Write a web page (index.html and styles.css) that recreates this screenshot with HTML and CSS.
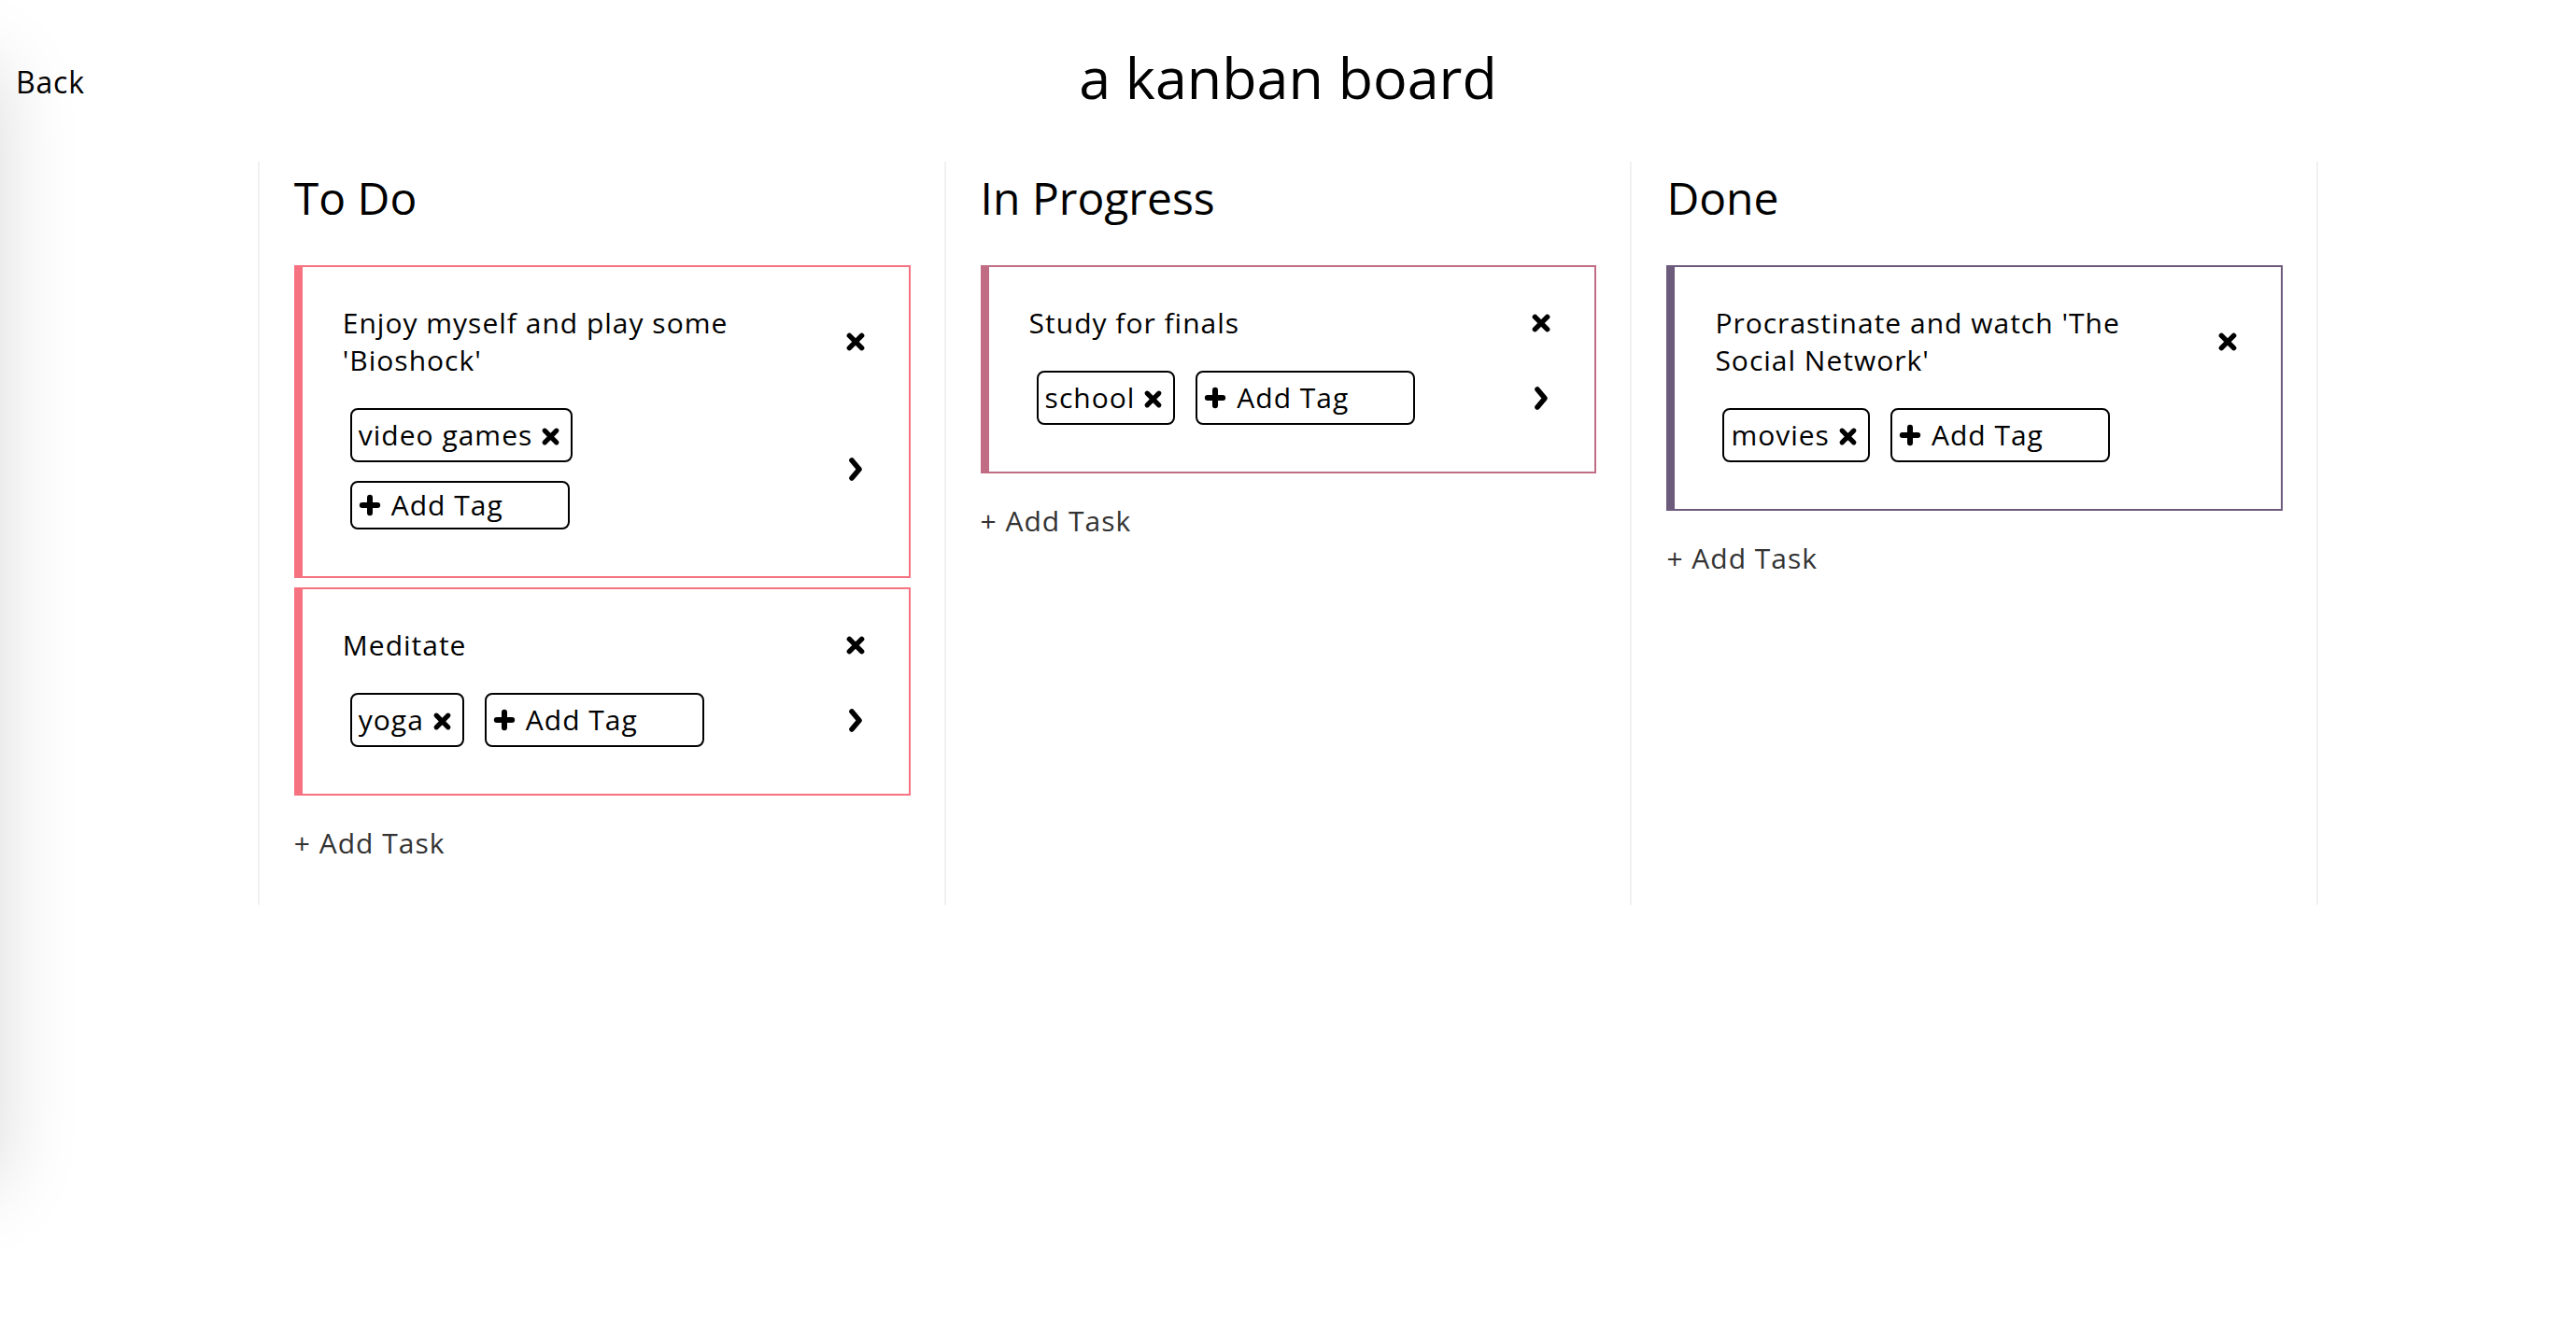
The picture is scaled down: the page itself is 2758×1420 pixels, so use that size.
FILE: index.html
```html
<!DOCTYPE html>
<html lang="en">
<head>
<meta charset="utf-8">
<title>a kanban board</title>
<link rel="stylesheet" href="styles.css">
</head>
<body>
<div class="drawer-shadow"></div>
<header class="top">
  <a class="back" href="#">Back</a>
  <h1 class="title">a kanban board</h1>
  <span></span>
</header>
<main class="board">
  <section class="column todo">
    <h2 class="col-title">To Do</h2>
    <div class="card">
      <div class="task-title">Enjoy myself and play some 'Bioshock'</div>
      <button class="icon-btn close" aria-label="delete"><svg viewBox="0 0 20 20"><path d="M4 4L16 16M16 4L4 16"/></svg></button>
      <div class="tags">
        <span class="tag">video games<svg class="tag-x" viewBox="0 0 20 20"><path d="M4 4L16 16M16 4L4 16"/></svg></span>
        <span class="add-tag"><svg class="plus" viewBox="0 0 22 22"><path d="M11 3.5V18.5M3.5 11H18.5"/></svg>Add Tag</span>
      </div>
      <button class="icon-btn move" aria-label="move"><svg viewBox="0 0 18 27"><path d="M5 4L13 13.5L5 23"/></svg></button>
    </div>
    <div class="card">
      <div class="task-title">Meditate</div>
      <button class="icon-btn close" aria-label="delete"><svg viewBox="0 0 20 20"><path d="M4 4L16 16M16 4L4 16"/></svg></button>
      <div class="tags">
        <span class="tag">yoga<svg class="tag-x" viewBox="0 0 20 20"><path d="M4 4L16 16M16 4L4 16"/></svg></span>
        <span class="add-tag"><svg class="plus" viewBox="0 0 22 22"><path d="M11 3.5V18.5M3.5 11H18.5"/></svg>Add Tag</span>
      </div>
      <button class="icon-btn move" aria-label="move"><svg viewBox="0 0 18 27"><path d="M5 4L13 13.5L5 23"/></svg></button>
    </div>
    <a class="add-task" href="#">+ Add Task</a>
  </section>
  <section class="column progress">
    <h2 class="col-title">In Progress</h2>
    <div class="card">
      <div class="task-title">Study for finals</div>
      <button class="icon-btn close" aria-label="delete"><svg viewBox="0 0 20 20"><path d="M4 4L16 16M16 4L4 16"/></svg></button>
      <div class="tags">
        <span class="tag">school<svg class="tag-x" viewBox="0 0 20 20"><path d="M4 4L16 16M16 4L4 16"/></svg></span>
        <span class="add-tag"><svg class="plus" viewBox="0 0 22 22"><path d="M11 3.5V18.5M3.5 11H18.5"/></svg>Add Tag</span>
      </div>
      <button class="icon-btn move" aria-label="move"><svg viewBox="0 0 18 27"><path d="M5 4L13 13.5L5 23"/></svg></button>
    </div>
    <a class="add-task" href="#">+ Add Task</a>
  </section>
  <section class="column done">
    <h2 class="col-title">Done</h2>
    <div class="card">
      <div class="task-title">Procrastinate and watch 'The Social Network'</div>
      <button class="icon-btn close" aria-label="delete"><svg viewBox="0 0 20 20"><path d="M4 4L16 16M16 4L4 16"/></svg></button>
      <div class="tags">
        <span class="tag">movies<svg class="tag-x" viewBox="0 0 20 20"><path d="M4 4L16 16M16 4L4 16"/></svg></span>
        <span class="add-tag"><svg class="plus" viewBox="0 0 22 22"><path d="M11 3.5V18.5M3.5 11H18.5"/></svg>Add Tag</span>
      </div>
    </div>
    <a class="add-task" href="#">+ Add Task</a>
  </section>
</main>
</body>
</html>
```
FILE: styles.css
```css
* { box-sizing: border-box; }

html, body {
  margin: 0;
  padding: 0;
  background: #fff;
}

body {
  font-family: "Open Sans", "Lato", sans-serif;
  color: #000;
  min-height: 1420px;
  overflow: hidden;
}

.drawer-shadow {
  position: fixed;
  left: -400px;
  top: 70px;
  width: 400px;
  height: 1200px;
  box-shadow: 0 0 80px rgba(0, 0, 0, 0.15);
  background: #fff;
}

.top {
  display: grid;
  grid-template-columns: 1fr auto 1fr;
  align-items: start;
  padding-top: 43px;
}

.back {
  justify-self: start;
  margin: 25px 0 0 17px;
  font-size: 32px;
  line-height: 40px;
  letter-spacing: 0.8px;
  color: #000;
  text-decoration: none;
}

.title {
  margin: 0;
  font-size: 61px;
  line-height: 80px;
  font-weight: 400;
}

.board {
  width: 80%;
  margin: 50px auto 0;
  display: flex;
}

.column {
  flex: 1 1 0;
  border-left: 2px solid #f1f1f1;
  padding: 9px 36px 46px 37px;
  display: flex;
  flex-direction: column;
  align-items: stretch;
}

.column:last-child {
  border-right: 2px solid #f1f1f1;
}

.col-title {
  margin: 0 0 42px;
  font-size: 48px;
  line-height: 60px;
  font-weight: 400;
}

.card {
  display: grid;
  grid-template-columns: 1fr auto;
  grid-template-rows: auto auto;
  row-gap: 21px;
  align-items: center;
  border: 2px solid;
  border-left-width: 9px;
  padding: 40px 46px 40px 43px;
  margin-bottom: 10px;
  background: #fff;
}

.todo .card { border-color: #f67280; }
.progress .card { border-color: #c06c84; }
.done .card { border-color: #6c5b7b; }

.task-title {
  grid-column: 1;
  grid-row: 1;
  max-width: 470px;
  font-size: 30px;
  line-height: 40px;
  letter-spacing: 1px;
}

.icon-btn {
  border: 0;
  background: none;
  padding: 0;
  margin: 0;
  display: flex;
  justify-self: center;
}

.icon-btn svg path {
  fill: none;
  stroke: #000;
  stroke-linecap: round;
  stroke-linejoin: round;
}

.close { grid-column: 2; grid-row: 1; }
.close svg { width: 22px; height: 22px; }
.close svg path { stroke-width: 5; }

.move { grid-column: 2; grid-row: 2; }
.move svg { width: 18px; height: 27px; }
.move svg path { stroke-width: 5.6; }

.tags {
  grid-column: 1;
  grid-row: 2;
  display: flex;
  flex-wrap: wrap;
  max-width: 470px;
  margin-left: -3px;
}

.tag {
  display: flex;
  align-items: center;
  margin: 10px 11px;
  padding: 7px 11px 7px 7px;
  border: 2px solid #000;
  border-radius: 8px;
  font-size: 30px;
  line-height: 40px;
  letter-spacing: 1px;
}

.tag-x {
  width: 21px;
  height: 21px;
  margin-left: 9px;
  margin-top: 2px;
}

.tag-x path,
.plus path {
  fill: none;
  stroke: #000;
  stroke-linecap: round;
}

.tag-x path { stroke-width: 5; }
.plus path { stroke-width: 5.5; }

.add-tag {
  display: flex;
  align-items: center;
  width: 235px;
  margin: 10px 11px;
  padding: 4px 8px 4px 7px;
  border: 2px solid #000;
  border-radius: 8px;
  font-size: 30px;
  line-height: 40px;
  letter-spacing: 1px;
}

.plus {
  width: 24px;
  height: 24px;
  margin-right: 11px;
}

.add-task {
  margin-top: 21px;
  font-size: 30px;
  line-height: 40px;
  letter-spacing: 1px;
  color: #333;
  text-decoration: none;
}
```
